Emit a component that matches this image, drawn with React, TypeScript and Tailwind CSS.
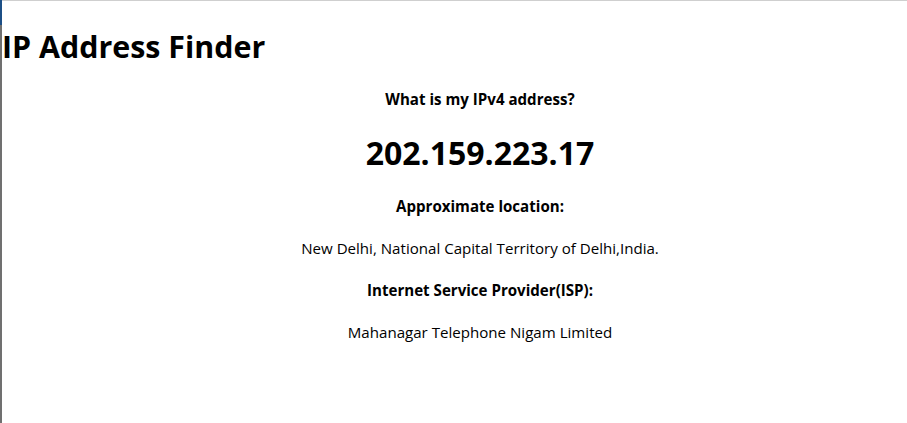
import React from 'react';

const App = () => {
  return (
    <div className="flex min-h-[423px] bg-white font-['Segoe_UI','Open_Sans',sans-serif] text-black">
      <div className="flex w-[2px] flex-col">
        <div className="h-[25px] bg-[#1c4f86]" />
        <div className="flex-1 bg-[#707070]" />
      </div>
      <div className="flex-1 border-t border-[#cfcfcf]">
        <h1 className="mt-[24px] text-[30.4px] font-bold leading-[43px]">IP Address Finder</h1>
        <div className="pl-[51px] text-center">
          <h4 className="mt-[21px] text-[15.1px] font-bold leading-[21px]">What is my IPv4 address?</h4>
          <h1 className="mt-[21px] text-[32px] font-bold leading-[43px]">202.159.223.17</h1>
          <h4 className="mt-[22px] text-[15.1px] font-bold leading-[21px]">Approximate location:</h4>
          <p className="mt-[21px] text-[15.1px] leading-[21px]">New Delhi, National Capital Territory of Delhi,India.</p>
          <h4 className="mt-[21px] text-[15.1px] font-bold leading-[21px]">Internet Service Provider(ISP):</h4>
          <p className="mt-[21px] text-[15.1px] leading-[21px]">Mahanagar Telephone Nigam Limited</p>
        </div>
      </div>
    </div>
  );
};

export default App;
